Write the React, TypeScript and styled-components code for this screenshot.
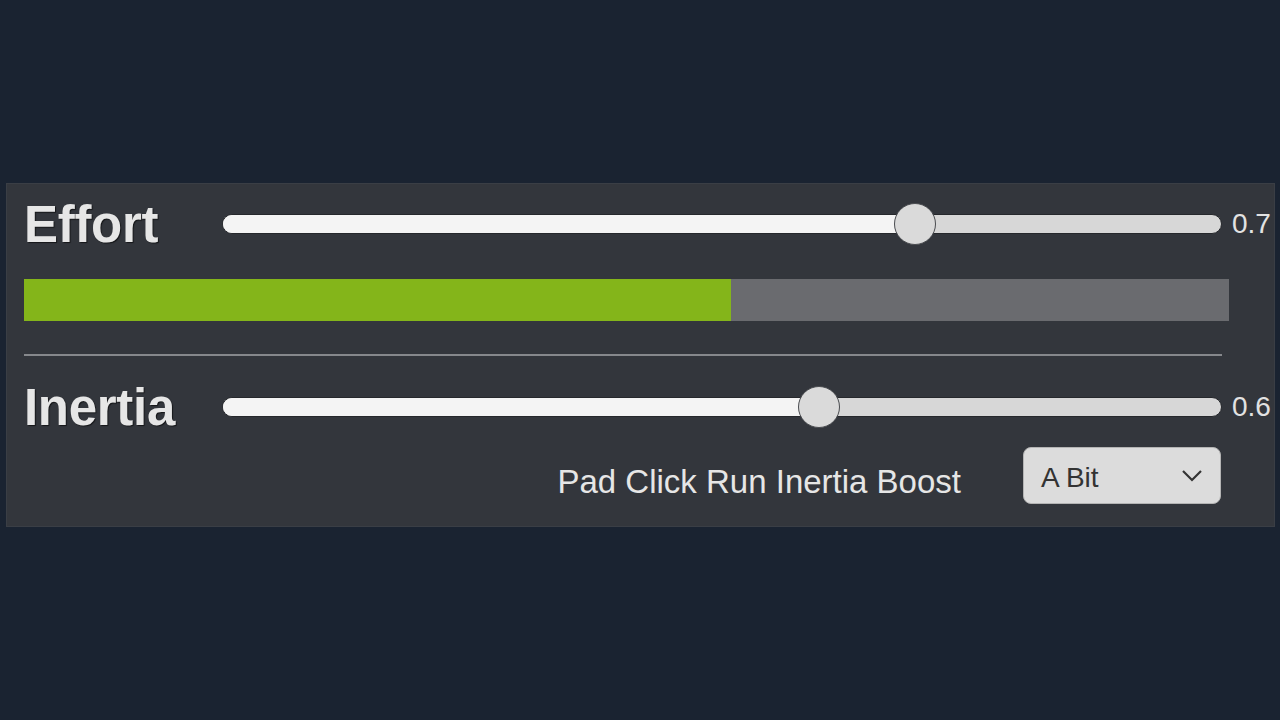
import React from 'react';
import styled, { createGlobalStyle } from 'styled-components';

const GlobalStyle = createGlobalStyle`
  html, body {
    margin: 0;
    padding: 0;
    background-color: #1a2331;
    font-family: 'Liberation Sans', Arial, sans-serif;
  }
`;

const Page = styled.div`
  width: 1280px;
  height: 720px;
  padding-top: 183px;
  box-sizing: border-box;
`;

const Panel = styled.div`
  margin-left: 6px;
  width: 1269px;
  height: 344px;
  box-sizing: border-box;
  padding: 11px 0 0 17px;
  background-color: #33363c;
  border: 1px solid #3a3e45;
  display: flex;
  flex-direction: column;
`;

const SliderRow = styled.div<{ $top: number }>`
  display: flex;
  align-items: center;
  height: 58px;
  margin-top: ${(p) => p.$top}px;
`;

const Label = styled.div`
  width: 198px;
  font-size: 51px;
  font-weight: 700;
  color: #e6e6e6;
  text-shadow: 1px 1px 1px rgba(0, 0, 0, 0.6);
  line-height: 58px;
  letter-spacing: -0.3px;
  padding-top: 2px;
`;

const Track = styled.div`
  position: relative;
  width: 1000px;
  height: 20px;
  box-sizing: border-box;
  border: 1px solid #26282c;
  border-radius: 10px;
  background-color: #d7d7d7;
`;

const TrackFill = styled.div`
  height: 100%;
  border-radius: 10px 0 0 10px;
  background-color: #f4f4f4;
`;

const Thumb = styled.div`
  position: absolute;
  top: 50%;
  width: 42px;
  height: 42px;
  box-sizing: border-box;
  margin-left: -21px;
  margin-top: -21px;
  border-radius: 50%;
  background-color: #dadada;
  border: 1.5px solid #4a4c50;
`;

const Value = styled.div`
  margin-left: 10px;
  font-size: 28px;
  color: #e2e2e2;
`;

const Bar = styled.div`
  margin-top: 26px;
  width: 1205px;
  height: 42px;
  background-color: #6a6b6f;
  display: flex;
`;

const BarFill = styled.div`
  height: 100%;
  background-color: #84b51a;
`;

const Divider = styled.div`
  margin-top: 33px;
  width: 1198px;
  height: 2px;
  background-color: #86888c;
`;

const OptionRow = styled.div`
  margin-top: 11px;
  width: 1197px;
  display: flex;
  align-items: center;
  justify-content: flex-end;
  gap: 62px;
`;

const OptionLabel = styled.div`
  font-size: 33px;
  color: #e6e6e6;
  padding-top: 12px;
`;

const Select = styled.div`
  width: 198px;
  height: 57px;
  box-sizing: border-box;
  padding: 0 17px 0 17px;
  border-radius: 8px;
  border: 1px solid #b4b4b4;
  background-color: #dcdcdc;
  display: flex;
  align-items: center;
  justify-content: space-between;
  font-size: 28px;
  color: #333;
`;

const SelectText = styled.span`
  margin-top: 4px;
`;

const Slider = ({ label, value, top }: { label: string; value: number; top: number }) => {
  const pos = 21 + value * 958;
  return (
    <SliderRow $top={top}>
      <Label>{label}</Label>
      <Track>
        <TrackFill style={{ width: pos }} />
        <Thumb style={{ left: pos }} />
      </Track>
      <Value>{value.toFixed(1)}</Value>
    </SliderRow>
  );
};

export default function App() {
  return (
    <Page>
      <GlobalStyle />
      <Panel>
        <Slider label="Effort" value={0.7} top={0} />
        <Bar>
          <BarFill style={{ width: `${0.587 * 100}%` }} />
        </Bar>
        <Divider />
        <Slider label="Inertia" value={0.6} top={22} />
        <OptionRow>
          <OptionLabel>Pad Click Run Inertia Boost</OptionLabel>
          <Select>
            <SelectText>A Bit</SelectText>
            <svg width="22" height="13" viewBox="0 0 22 13">
              <polyline points="2,2 11,11 20,2" fill="none" stroke="#333" strokeWidth="2.2" />
            </svg>
          </Select>
        </OptionRow>
      </Panel>
    </Page>
  );
}
